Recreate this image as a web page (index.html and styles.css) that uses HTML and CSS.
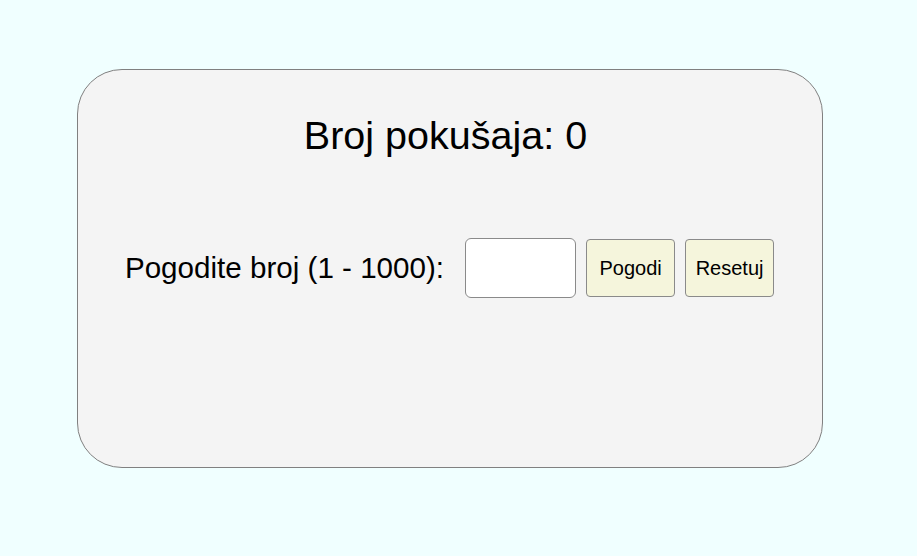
FILE: index.html
```html
<!DOCTYPE html>
<html lang="sr">
<head>
<meta charset="utf-8">
<title>Pogodi broj</title>
<link rel="stylesheet" href="styles.css">
</head>
<body>
<div class="card">
  <h1 class="title">Broj pokušaja: <span class="count">0</span></h1>
  <div class="row">
    <label class="label" for="guess">Pogodite broj (1 - 1000):</label>
    <input class="input" id="guess" type="text">
    <button class="btn">Pogodi</button>
    <button class="btn">Resetuj</button>
  </div>
</div>
</body>
</html>
```
FILE: styles.css
```css
html, body {
  margin: 0;
  padding: 0;
}
body {
  background: #f0ffff;
  font-family: "Liberation Sans", Arial, sans-serif;
  color: #000;
  padding: 69px 0 0 77px;
}
.card {
  box-sizing: border-box;
  width: 746px;
  height: 399px;
  background: #f4f4f4;
  border: 1px solid #808080;
  border-radius: 45px;
  padding-top: 43px;
  display: flex;
  flex-direction: column;
  align-items: center;
}
.title {
  margin: 0;
  font-size: 39.5px;
  font-weight: normal;
  line-height: 45px;
  padding-right: 9px;
}
.row {
  margin-top: 80px;
  display: flex;
  align-items: center;
  justify-content: center;
  gap: 10px;
  padding-right: 1px;
}
.label {
  font-size: 29.6px;
  margin-right: 11px;
}
.input {
  box-sizing: border-box;
  width: 111px;
  height: 60px;
  border: 1px solid #8a8a8a;
  border-radius: 6px;
  background: #fff;
  font-size: 20px;
  padding: 0 8px;
}
.btn {
  box-sizing: border-box;
  width: 89px;
  height: 58px;
  background: #f5f5dc;
  border: 1px solid #8a8a8a;
  border-radius: 4px;
  font-family: "Liberation Sans", Arial, sans-serif;
  font-size: 20px;
  color: #000;
  padding: 0;
}
```
